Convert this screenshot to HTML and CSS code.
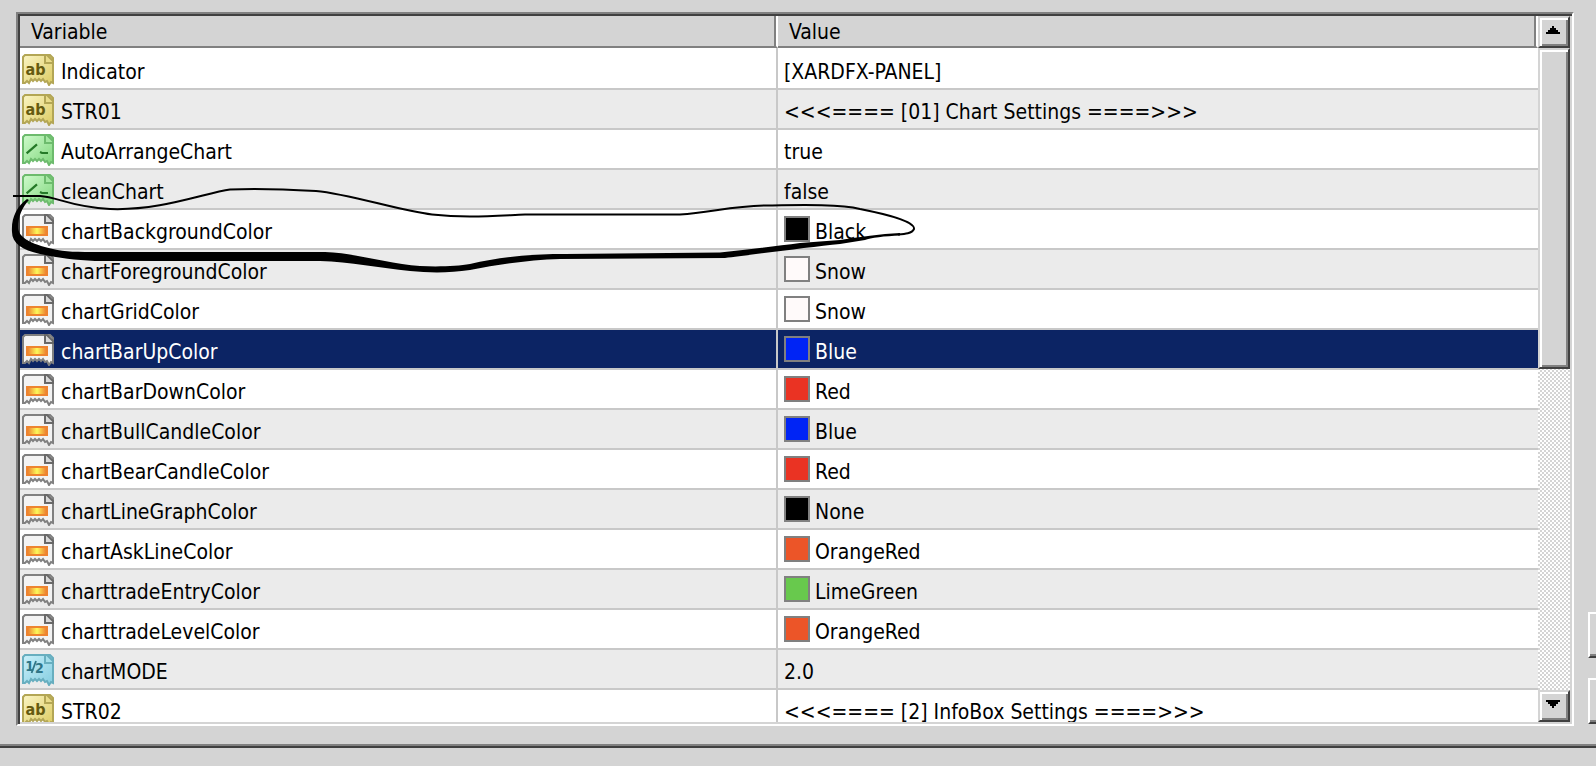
FILE: index.html
```html
<!DOCTYPE html>
<html lang="en">
<head>
  <meta charset="utf-8">
  <title>Inputs</title>
  <link rel="stylesheet" href="styles.css">
</head>
<body>
  <!-- icon shapes shared by the rows -->
  <svg class="defs" width="0" height="0" aria-hidden="true">
    <defs>
      <linearGradient id="g-yellow" x1="0" y1="0" x2="1" y2="1"><stop offset="0" stop-color="#fbf5c4"/><stop offset="1" stop-color="#dccb62"/></linearGradient>
      <linearGradient id="g-green" x1="0" y1="0" x2="1" y2="1"><stop offset="0" stop-color="#cffbcc"/><stop offset="1" stop-color="#7fd67c"/></linearGradient>
      <linearGradient id="g-blue" x1="0" y1="0" x2="1" y2="1"><stop offset="0" stop-color="#c9f0fa"/><stop offset="1" stop-color="#84cde0"/></linearGradient>
      <linearGradient id="g-bar"><stop offset="0" stop-color="#ee8430"/><stop offset=".5" stop-color="#fdf95a"/><stop offset="1" stop-color="#ee8430"/></linearGradient>
      <path id="page" d="M.5 14.5V1.5L1.5.5H14L15.5 2V14.5L14.5 14L13.5 15.5L12.5 13.5L11.5 14L10.5 12.5L9.5 13.5L8.5 12.5L7.5 13.5L6.5 12.5L5.5 13.5L4.5 12.5L3.5 14.5L2.5 13.5L1.5 14.5Z"/>
      <path id="fold" d="M11.500 .5V4.500H15.500V3.500L12.500 .5Z"/>
      <symbol id="i-str" viewBox="0 0 16 16">
        <use href="#page" fill="url(#g-yellow)" stroke="#b3a655"/>
        <use href="#fold" fill="#e9dc8a" stroke="#b3a655"/>
        <text x="1.8" y="10.5" class="glyph" fill="#655a10">ab</text>
      </symbol>
      <symbol id="i-bool" viewBox="0 0 16 16">
        <use href="#page" fill="url(#g-green)" stroke="#6dbb6d"/>
        <use href="#fold" fill="#a5e8a2" stroke="#6dbb6d"/>
        <path d="M2.300 9.700L7.500 5.200M9 9L10 9.500H13" fill="none" stroke="#257a28" stroke-width="1.1"/>
      </symbol>
      <symbol id="i-color" viewBox="0 0 16 16">
        <use href="#page" fill="#f3f3f3" stroke="#808080"/>
        <use href="#fold" fill="#d9d9d9" stroke="#686868"/>
        <rect x="2" y="6" width="11" height="5" fill="#ee8430"/>
        <rect x="3" y="7" width="9" height="3" fill="url(#g-bar)"/>
      </symbol>
      <symbol id="i-num" viewBox="0 0 16 16">
        <use href="#page" fill="url(#g-blue)" stroke="#67aebf"/>
        <use href="#fold" fill="#a5dfec" stroke="#67aebf"/>
        <text x="1.6" y="8.6" class="glyph glyph-small" fill="#2f7688">1</text>
        <path d="M4.8 9.5L7 3.5" stroke="#2f7688" stroke-width=".9"/>
        <text x="6.5" y="9.6" class="glyph glyph-small" fill="#2f7688">2</text>
      </symbol>
    </defs>
  </svg>

  <div class="dialog">
    <div class="list">
      <div class="view">
        <table>
          <colgroup><col class="col-variable"><col></colgroup>
          <thead>
            <tr><th scope="col">Variable</th><th scope="col">Value</th></tr>
          </thead>
          <tbody>
            <tr><td><div class="cell"><svg class="icon"><use href="#i-str"/></svg>Indicator</div></td><td><div class="cell">[XARDFX-PANEL]</div></td></tr>
            <tr><td><div class="cell"><svg class="icon"><use href="#i-str"/></svg>STR01</div></td><td><div class="cell">&lt;&lt;&lt;==== [01] Chart Settings ====&gt;&gt;&gt;</div></td></tr>
            <tr><td><div class="cell"><svg class="icon"><use href="#i-bool"/></svg>AutoArrangeChart</div></td><td><div class="cell">true</div></td></tr>
            <tr><td><div class="cell"><svg class="icon"><use href="#i-bool"/></svg>cleanChart</div></td><td><div class="cell">false</div></td></tr>
            <tr><td><div class="cell"><svg class="icon"><use href="#i-color"/></svg>chartBackgroundColor</div></td><td><div class="cell"><span class="swatch black"></span>Black</div></td></tr>
            <tr><td><div class="cell"><svg class="icon"><use href="#i-color"/></svg>chartForegroundColor</div></td><td><div class="cell"><span class="swatch snow"></span>Snow</div></td></tr>
            <tr><td><div class="cell"><svg class="icon"><use href="#i-color"/></svg>chartGridColor</div></td><td><div class="cell"><span class="swatch snow"></span>Snow</div></td></tr>
            <tr class="selected"><td><div class="cell"><svg class="icon"><use href="#i-color"/></svg>chartBarUpColor</div></td><td><div class="cell"><span class="swatch blue"></span>Blue</div></td></tr>
            <tr><td><div class="cell"><svg class="icon"><use href="#i-color"/></svg>chartBarDownColor</div></td><td><div class="cell"><span class="swatch red"></span>Red</div></td></tr>
            <tr><td><div class="cell"><svg class="icon"><use href="#i-color"/></svg>chartBullCandleColor</div></td><td><div class="cell"><span class="swatch blue"></span>Blue</div></td></tr>
            <tr><td><div class="cell"><svg class="icon"><use href="#i-color"/></svg>chartBearCandleColor</div></td><td><div class="cell"><span class="swatch red"></span>Red</div></td></tr>
            <tr><td><div class="cell"><svg class="icon"><use href="#i-color"/></svg>chartLineGraphColor</div></td><td><div class="cell"><span class="swatch black"></span>None</div></td></tr>
            <tr><td><div class="cell"><svg class="icon"><use href="#i-color"/></svg>chartAskLineColor</div></td><td><div class="cell"><span class="swatch orangered"></span>OrangeRed</div></td></tr>
            <tr><td><div class="cell"><svg class="icon"><use href="#i-color"/></svg>charttradeEntryColor</div></td><td><div class="cell"><span class="swatch limegreen"></span>LimeGreen</div></td></tr>
            <tr><td><div class="cell"><svg class="icon"><use href="#i-color"/></svg>charttradeLevelColor</div></td><td><div class="cell"><span class="swatch orangered"></span>OrangeRed</div></td></tr>
            <tr><td><div class="cell"><svg class="icon"><use href="#i-num"/></svg>chartMODE</div></td><td><div class="cell">2.0</div></td></tr>
            <tr><td><div class="cell"><svg class="icon"><use href="#i-str"/></svg>STR02</div></td><td><div class="cell">&lt;&lt;&lt;==== [2] InfoBox Settings ====&gt;&gt;&gt;</div></td></tr>
          </tbody>
        </table>
      </div>
      <div class="scrollbar">
        <button class="raised arrow" type="button" aria-label="Scroll up">
          <svg width="14" height="8" viewBox="0 0 7 4" shape-rendering="crispEdges"><path d="M3 0h1v1h1v1h1v1h1v1H0V3h1V2h1V1h1z"/></svg>
        </button>
        <div class="track"><div class="raised thumb"></div></div>
        <button class="raised arrow" type="button" aria-label="Scroll down">
          <svg width="14" height="8" viewBox="0 0 7 4" shape-rendering="crispEdges"><path d="M0 0h7v1H6v1H5v1H4v1H3V3H2V2H1V1H0z"/></svg>
        </button>
      </div>
    </div>
    <div class="side">
      <button class="side-button" type="button" aria-label="Load"></button>
      <button class="side-button" type="button" aria-label="Save"></button>
    </div>
  </div>

  <!-- pen mark round chartBackgroundColor -->
  <svg class="pen" width="920" height="290" viewBox="0 0 920 290" aria-hidden="true">
    <path class="pen-line" d="M13 196H40C58 197 70 207 110 209C160 211 205 193 230 189.500C250 188.500 290 189.500 316 191C350 194 400 211 432 214.500C465 218 490 216 525 214.500H680C710 213 730 206 765 205.500C800 205 840 204 860 209C885 214 915 221 914 229C912 233.500 905 234 898 234.500"/>
    <path d="M29 200C22 207 18 218 18 227C18 237 30 244 53 249C65 252 77 252 100 252H325C355 253 390 264 420 266C440 267 458 266 470 264C500 257 530 254 565 254L720 252.500C750 249 777 246 800 243L840 240C860 237 880 234 900 233V235.500C885 236 870 238 865 240L840 244C810 247 750 255 725 258L560 259C530 260 500 264 470 270C450 273 430 273 410 271C380 268 350 262 320 261H95C75 260 60 258 40 254C22 250 12 243 12 232C11 218 17 206 27 199Z"/>
  </svg>
</body>
</html>
```
FILE: styles.css
```css
* {
  box-sizing: border-box;
}

body {
  display: flex;
  flex-direction: column;
  height: 100vh;
  margin: 0;
  padding-bottom: 18px;
  overflow: hidden;
  background: #d4d4d4;
  color: #000;
  font-family: "DejaVu Sans Condensed", Tahoma, sans-serif;
  font-size: 21px;
  line-height: 26px;
}

.defs {
  position: absolute;
}

.dialog {
  display: flex;
  flex: 1;
  gap: 14px;
  min-height: 0;
  padding: 12px 0 20px 16px;
  border-bottom: 2px solid #404040;
  box-shadow: inset 0 -2px #808080;
}

/* sunken list frame */
.list {
  display: flex;
  flex: 1;
  min-width: 0;
  border: 2px solid;
  border-color: #808080 #fff #fff #808080;
  background: #d4d4d4;
  padding: 2px;
  box-shadow: inset 2px 2px #404040;
}

.view {
  flex: 1;
  min-width: 0;
  overflow: hidden;
  background: #fff;
}

table {
  width: 100%;
  table-layout: fixed;
  border-collapse: separate;
  border-spacing: 0;
}

.col-variable {
  width: 758px;
}

th {
  height: 32px;
  padding: 2px 0 0 11px;
  border-right: 2px solid #fff;
  border-bottom: 2px solid #808080;
  box-shadow: inset -2px 0 #808080;
  background: #d4d4d4;
  font-weight: normal;
  text-align: left;
}

td {
  padding: 0;
  border-bottom: 2px solid #c8c8c8;
}

td:first-child {
  border-right: 2px solid #c8c8c8;
}

tbody tr:first-child td {
  padding-top: 2px;
}

tbody tr:nth-child(even) {
  background: #ebebeb;
}

tbody tr.selected {
  background: #0c2464;
  color: #fff;
}

.cell {
  display: flex;
  gap: 5px;
  height: 38px;
  padding: 9px 0 0 6px;
  white-space: nowrap;
}

td:first-child .cell {
  gap: 7px;
  padding-left: 2px;
}

.icon {
  width: 32px;
  height: 32px;
  margin-top: -5px;
}

.glyph {
  font: bold 8px "DejaVu Sans Condensed", sans-serif;
}

.glyph-small {
  font-size: 7px;
}

.swatch {
  width: 26px;
  height: 26px;
  margin-top: -3px;
  border: 2px solid #808080;
}

.black { background: #000; }
.snow { background: #fffafa; }
.blue { background: #0024f5; }
.red { background: #ea3323; }
.orangered { background: #ec5528; }
.limegreen { background: #68c94d; }

.scrollbar {
  display: flex;
  flex-direction: column;
  width: 32px;
}

.raised {
  border: 2px solid;
  border-color: #d4d4d4 #404040 #404040 #d4d4d4;
  box-shadow: inset 2px 2px #fff, inset -2px -2px #808080;
  background: #d4d4d4;
}

.arrow {
  display: flex;
  align-items: center;
  justify-content: center;
  height: 32px;
  padding: 0 2px 4px 0;
}

.track {
  flex: 1;
  background: repeating-conic-gradient(#fff 0 25%, #d4d4d4 0 50%) 0 0 / 4px 4px;
}

.thumb {
  height: 50%;
}

/* buttons run off the right edge of the window */
.side {
  display: flex;
  flex-direction: column;
  justify-content: flex-end;
  gap: 20px;
  width: 8px;
  padding-bottom: 2px;
  overflow: hidden;
}

.side-button {
  width: 150px;
  height: 46px;
  border: 2px solid;
  border-color: #fff #404040 #404040 #fff;
  box-shadow: inset -2px -2px #808080;
  background: #d4d4d4;
}

.pen {
  position: absolute;
  top: 0;
  left: 0;
  pointer-events: none;
}

.pen-line {
  fill: none;
  stroke: #000;
  stroke-width: 2;
}
```
